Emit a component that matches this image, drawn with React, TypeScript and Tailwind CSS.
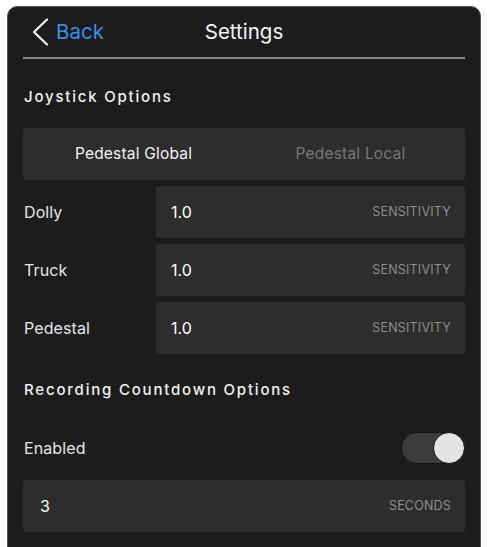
import React from "react";

const font = { fontFamily: "Inter, 'Noto Sans', sans-serif" };

function Row({ label, value, unit }: { label: string; value: string; unit: string }) {
  return (
    <div className="flex h-[52px] items-center">
      <div className="w-[133px] pl-[1px] text-[16px] tracking-[0.1px] text-[#e6e6e6]">{label}</div>
      <div className="flex h-full flex-1 items-center justify-between rounded-[3px] bg-[#2d2d2d] pl-[15px] pr-[14px]">
        <span className="text-[16px] text-white">{value}</span>
        <span className="text-[12.5px] tracking-[0.2px] text-[#8c8c8c]">{unit}</span>
      </div>
    </div>
  );
}

export default function App() {
  return (
    <div className="min-h-[547px] w-[487px] overflow-hidden bg-white pt-[6px]" style={font}>
      <div className="ml-[7px] h-[560px] w-[474px] rounded-t-[10px] border border-[#5a5a5a] bg-[#1c1c1c] px-[15px]">
        <div className="relative flex h-[50px] items-center">
          <div className="flex items-center pl-[9px]">
            <svg width="17" height="28" viewBox="0 0 17 28" fill="none">
              <path d="M15 1.5 L2 14 L15 26.5" stroke="#f2f2f2" strokeWidth="2.2" strokeLinecap="round" strokeLinejoin="round" />
            </svg>
            <span className="ml-[7px] text-[20.5px] text-[#3d8ee3]">Back</span>
          </div>
          <div className="absolute left-0 right-0 text-center text-[20.5px] text-[#f4f4f4]">Settings</div>
        </div>
        <div className="h-[2px] bg-[#8a8a8a]" />
        <div className="mb-[21px] mt-[28px] pl-[1px] text-[15px] font-medium leading-[20px] tracking-[1.8px] text-[#f2f2f2]">
          Joystick Options
        </div>
        <div className="flex h-[52px] items-center rounded-[3px] bg-[#2d2d2d] text-[15.5px] tracking-[0.2px]">
          <div className="flex-1 pl-[2px] text-center text-[#f4f4f4]">Pedestal Global</div>
          <div className="flex-1 pr-[6px] text-center text-[#767676]">Pedestal Local</div>
        </div>
        <div className="mt-[6px] flex flex-col gap-[6px]">
          <Row label="Dolly" value="1.0" unit="SENSITIVITY" />
          <Row label="Truck" value="1.0" unit="SENSITIVITY" />
          <Row label="Pedestal" value="1.0" unit="SENSITIVITY" />
        </div>
        <div className="mt-[26px] pl-[1px] text-[15px] font-medium leading-[20px] tracking-[1.8px] text-[#f2f2f2]">
          Recording Countdown Options
        </div>
        <div className="mt-[32px] flex h-[32px] items-center justify-between">
          <span className="pl-[1px] text-[16px] tracking-[0.1px] text-[#e6e6e6]">Enabled</span>
          <div className="relative h-[32px] w-[64px] rounded-full border border-[#151515] bg-[#3c3c3c]">
            <div className="absolute right-[-1px] top-[-1px] h-[32px] w-[32px] rounded-full border border-[#151515] bg-[#e4e4e4]" />
          </div>
        </div>
        <div className="mt-[16px] flex h-[52px] items-center justify-between rounded-[3px] bg-[#2d2d2d] pl-[17px] pr-[14px]">
          <span className="text-[16px] text-white">3</span>
          <span className="text-[12.5px] tracking-[0.2px] text-[#8c8c8c]">SECONDS</span>
        </div>
      </div>
    </div>
  );
}
